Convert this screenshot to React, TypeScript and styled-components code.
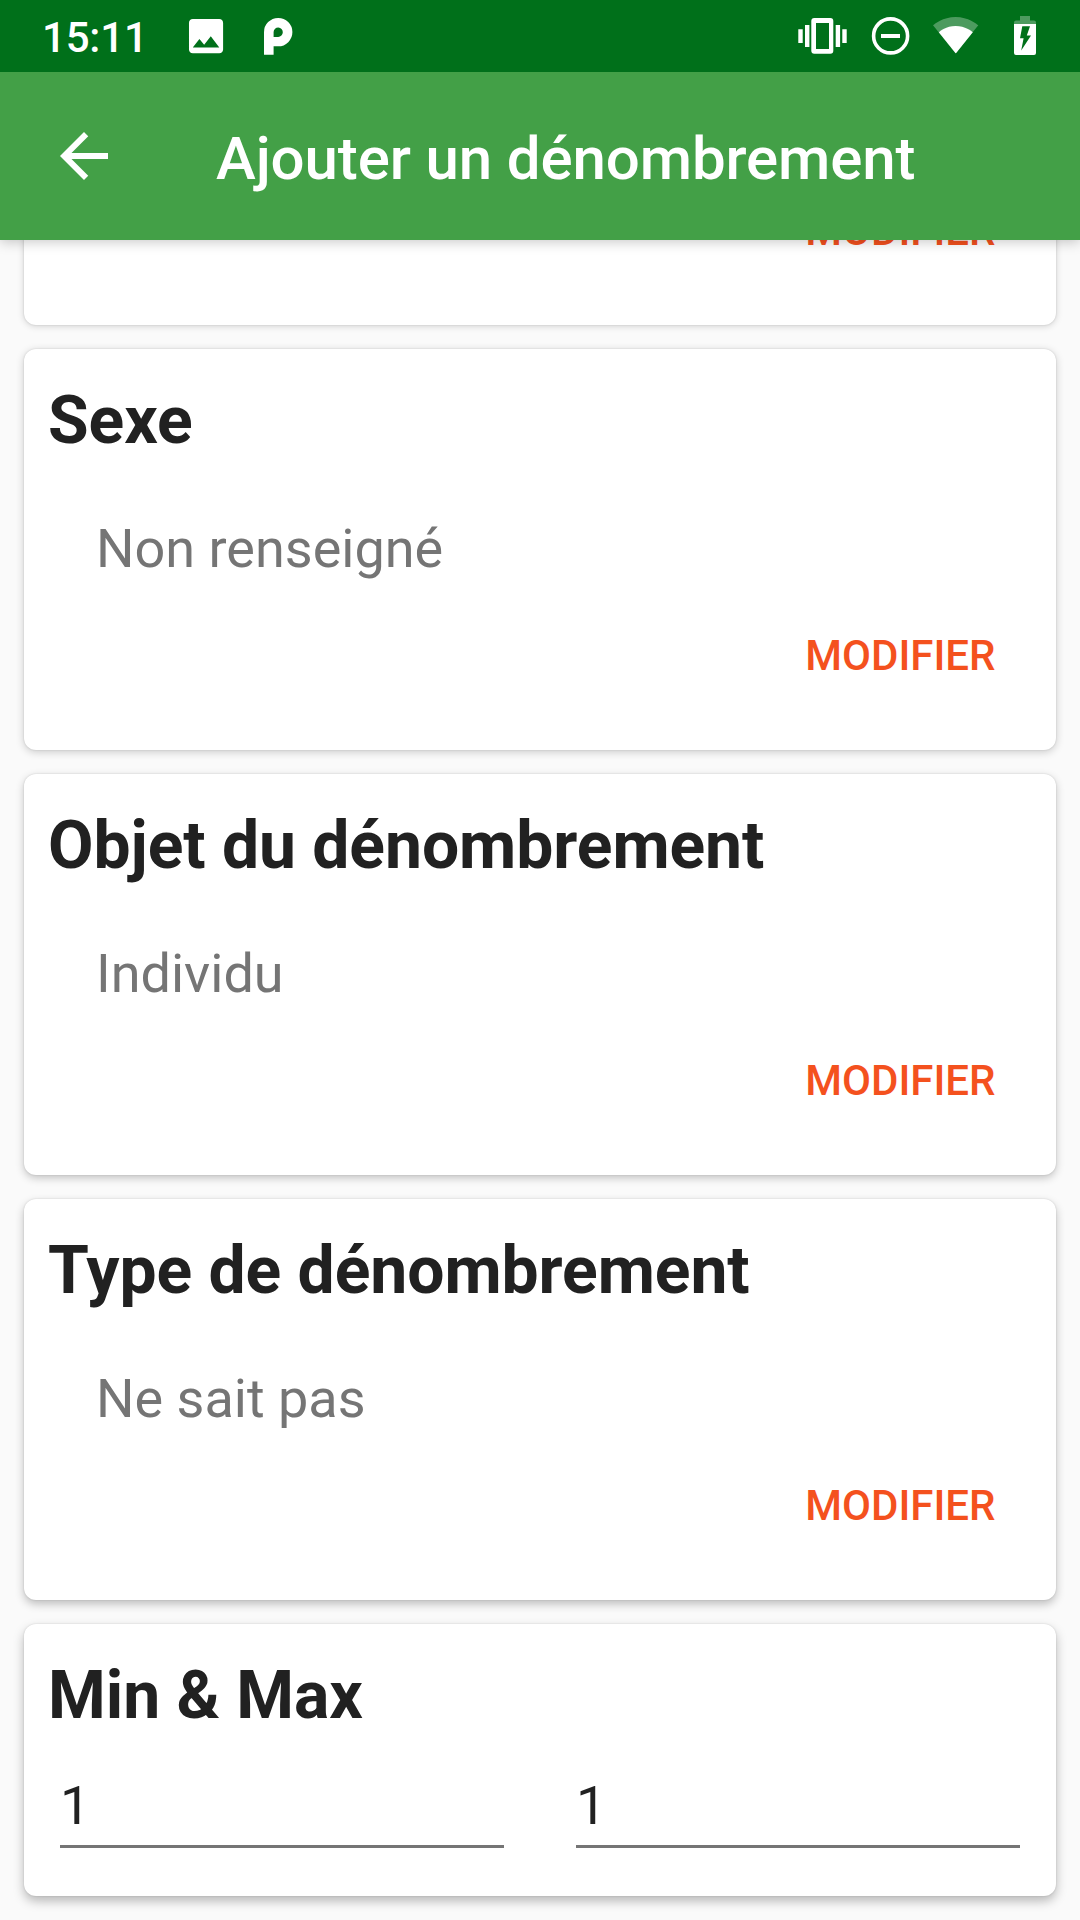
import React from 'react';
import styled, { createGlobalStyle } from 'styled-components';

const GlobalStyle = createGlobalStyle`
  *, *::before, *::after { box-sizing: border-box; }
  html, body { margin: 0; padding: 0; background: #fafafa; }
  body { font-family: Roboto, "Liberation Sans", sans-serif; }
`;

const Screen = styled.div`
  width: 1080px;
  height: 1920px;
  display: flex;
  flex-direction: column;
  overflow: hidden;
  background: #fafafa;
`;

const StatusBar = styled.header`
  flex: none;
  height: 72px;
  padding: 0 43px 0 42px;
  display: flex;
  justify-content: space-between;
  background: #00701a;
  color: #fff;
  position: relative;
  z-index: 2;
`;

const StatusGroup = styled.div`
  display: flex;
`;

const Clock = styled.span`
  width: 141px;
  font-size: 42px;
  font-weight: 500;
  line-height: 76px;
  letter-spacing: -0.2px;
`;

const StatusIcon = styled.svg<{ $w: number; $gap?: number }>`
  flex: none;
  width: ${(p) => p.$w}px;
  height: 72px;
  margin-left: ${(p) => p.$gap ?? 0}px;
  fill: #fff;
`;

const AppBar = styled.div`
  flex: none;
  height: 168px;
  padding: 0 48px;
  display: flex;
  align-items: center;
  gap: 96px;
  background: #43a047;
  color: #fff;
  position: relative;
  z-index: 1;
  box-shadow: 0 2px 12px rgba(0, 0, 0, 0.22);
`;

const BackButton = styled.button`
  width: 72px;
  height: 72px;
  padding: 0;
  border: 0;
  background: none;
  display: flex;

  svg {
    width: 72px;
    height: 72px;
    fill: #fff;
  }
`;

const ScreenTitle = styled.h1`
  margin: 6px 0 0;
  font-size: 60px;
  font-weight: 500;
  line-height: 70px;
  letter-spacing: -0.12px;
  white-space: nowrap;
`;

const Content = styled.main`
  flex: 1;
  min-height: 0;
  padding: 0 24px 24px;
  display: flex;
  flex-direction: column;
  justify-content: flex-end;
  gap: 24px;
`;

const Card = styled.section<{ $depth: number }>`
  flex: none;
  padding: 32px 24px 0;
  display: flex;
  flex-direction: column;
  border-radius: 12px;
  background: #fff;
  box-shadow:
    0 0 2px rgba(0, 0, 0, 0.14),
    0 ${(p) => p.$depth}px ${(p) => 6 + p.$depth}px rgba(0, 0, 0, ${(p) => 0.15 + p.$depth * 0.024});
`;

const ChoiceBox = styled(Card)`
  height: 401px;
  padding-bottom: 69px;
`;

const CardTitle = styled.h2`
  margin: 0;
  font-size: 66px;
  font-weight: 700;
  line-height: 79px;
  letter-spacing: -0.05px;
  color: #212121;
`;

const Value = styled.p`
  margin: 57px 0 0 48px;
  font-size: 54px;
  line-height: 64px;
  color: #757575;
`;

const Action = styled.button`
  margin: auto 36.500px 0 0;
  padding: 0;
  border: 0;
  background: none;
  align-self: flex-end;
  font: 500 42px/50px Roboto, "Liberation Sans", sans-serif;
  color: #f4511e;
`;

const RangeCard = styled(Card)`
  padding-bottom: 48px;
`;

const Fields = styled.div`
  margin: 39px 12px 0;
  display: grid;
  grid-template-columns: 1fr 1fr;
  gap: 72px;
`;

const Field = styled.div`
  padding-bottom: 7px;
  border-bottom: 3px solid #757575;
  font-size: 54px;
  line-height: 64px;
  color: #212121;
`;

interface ChoiceProps {
  title?: string;
  value?: string;
  depth: number;
}

function ChoiceCard({ title, value, depth }: ChoiceProps) {
  return (
    <ChoiceBox $depth={depth}>
      {title && <CardTitle>{title}</CardTitle>}
      {value && <Value>{value}</Value>}
      <Action>MODIFIER</Action>
    </ChoiceBox>
  );
}

const choices: ChoiceProps[] = [
  { depth: 1 },
  { title: 'Sexe', value: 'Non renseigné', depth: 2 },
  { title: 'Objet du dénombrement', value: 'Individu', depth: 3 },
  { title: 'Type de dénombrement', value: 'Ne sait pas', depth: 4 },
];

export default function App() {
  return (
    <Screen>
      <GlobalStyle />
      <StatusBar>
        <StatusGroup>
          <Clock>15:11</Clock>
          <StatusIcon $w={46} viewBox="183 0 46 72">
            <path
              transform="translate(183.3 13.4) scale(1.895)"
              d="M21 19V5c0-1.1-.9-2-2-2H5c-1.1 0-2 .9-2 2v14c0 1.1.9 2 2 2h14c1.1 0 2-.9 2-2zM8.5 13.5l2.5 3.01L14.5 12l4.5 6H5l3.5-4.5z"
            />
          </StatusIcon>
          <StatusIcon $w={34} $gap={32} viewBox="261 0 34 72">
            <path
              fillRule="evenodd"
              d="M264 54.7V32.2a14.2 14.2 0 1 1 14.2 14.1H273.6V54.7zM273.6 36.9V32a4.6 4.7 0 1 1 4.6 4.9z"
            />
          </StatusIcon>
        </StatusGroup>
        <StatusGroup>
          <StatusIcon $w={50} viewBox="798 0 50 72">
            <path
              fillRule="evenodd"
              d="M814.3 18h16a3 3 0 0 1 3 3v29.7a3 3 0 0 1-3 3h-16a3 3 0 0 1-3-3V21a3 3 0 0 1 3-3zM816 23v26h13V23z"
            />
            <path d="M805 25h4.4v22H805zM798.3 29.3h4.4V43h-4.4zM835.7 25h4.4v22h-4.4zM842.3 29.3h4.4V43h-4.4z" />
          </StatusIcon>
          <StatusIcon $w={40} $gap={23} viewBox="871 0 40 72">
            <circle cx="890.6" cy="35.9" r="17" fill="none" stroke="#fff" strokeWidth="3.6" />
            <path d="M881 34h19v4h-19z" />
          </StatusIcon>
          <StatusIcon $w={46} $gap={22} viewBox="933 0 46 72">
            <path
              fillOpacity="0.3"
              d="M955.6 53.2L933 25.3C934.4 24.2 942.8 17 955.6 17S976.9 24.2 978.3 25.3z"
            />
            <path d="M955.6 53.2L938.8 32.3C940 31.2 946 26 955.6 26S971.6 31.2 972.8 32.3L956.2 53z" />
          </StatusIcon>
          <StatusIcon $w={23} $gap={35} viewBox="1014 0 23 72">
            <path fillOpacity="0.3" d="M1014 24v-1.5a2 2 0 0 1 2-2h4V16h10v4.5h4a2 2 0 0 1 2 2V24z" />
            <path
              fillRule="evenodd"
              d="M1014 24h22v29a2 2 0 0 1-2 2h-18a2 2 0 0 1-2-2zM1022.3 26.3L1020 38.3h3.6L1021.2 50.5L1031 35.6h-4.2L1030 26.3z"
            />
          </StatusIcon>
        </StatusGroup>
      </StatusBar>

      <AppBar>
        <BackButton aria-label="Retour">
          <svg viewBox="0 0 24 24">
            <path d="M20 11H7.83l5.59-5.59L12 4l-8 8 8 8 1.41-1.41L7.83 13H20v-2z" />
          </svg>
        </BackButton>
        <ScreenTitle>Ajouter un dénombrement</ScreenTitle>
      </AppBar>

      <Content>
        {choices.map((choice) => (
          <ChoiceCard key={choice.depth} {...choice} />
        ))}
        <RangeCard $depth={5}>
          <CardTitle>Min &amp; Max</CardTitle>
          <Fields>
            <Field>1</Field>
            <Field>1</Field>
          </Fields>
        </RangeCard>
      </Content>
    </Screen>
  );
}
